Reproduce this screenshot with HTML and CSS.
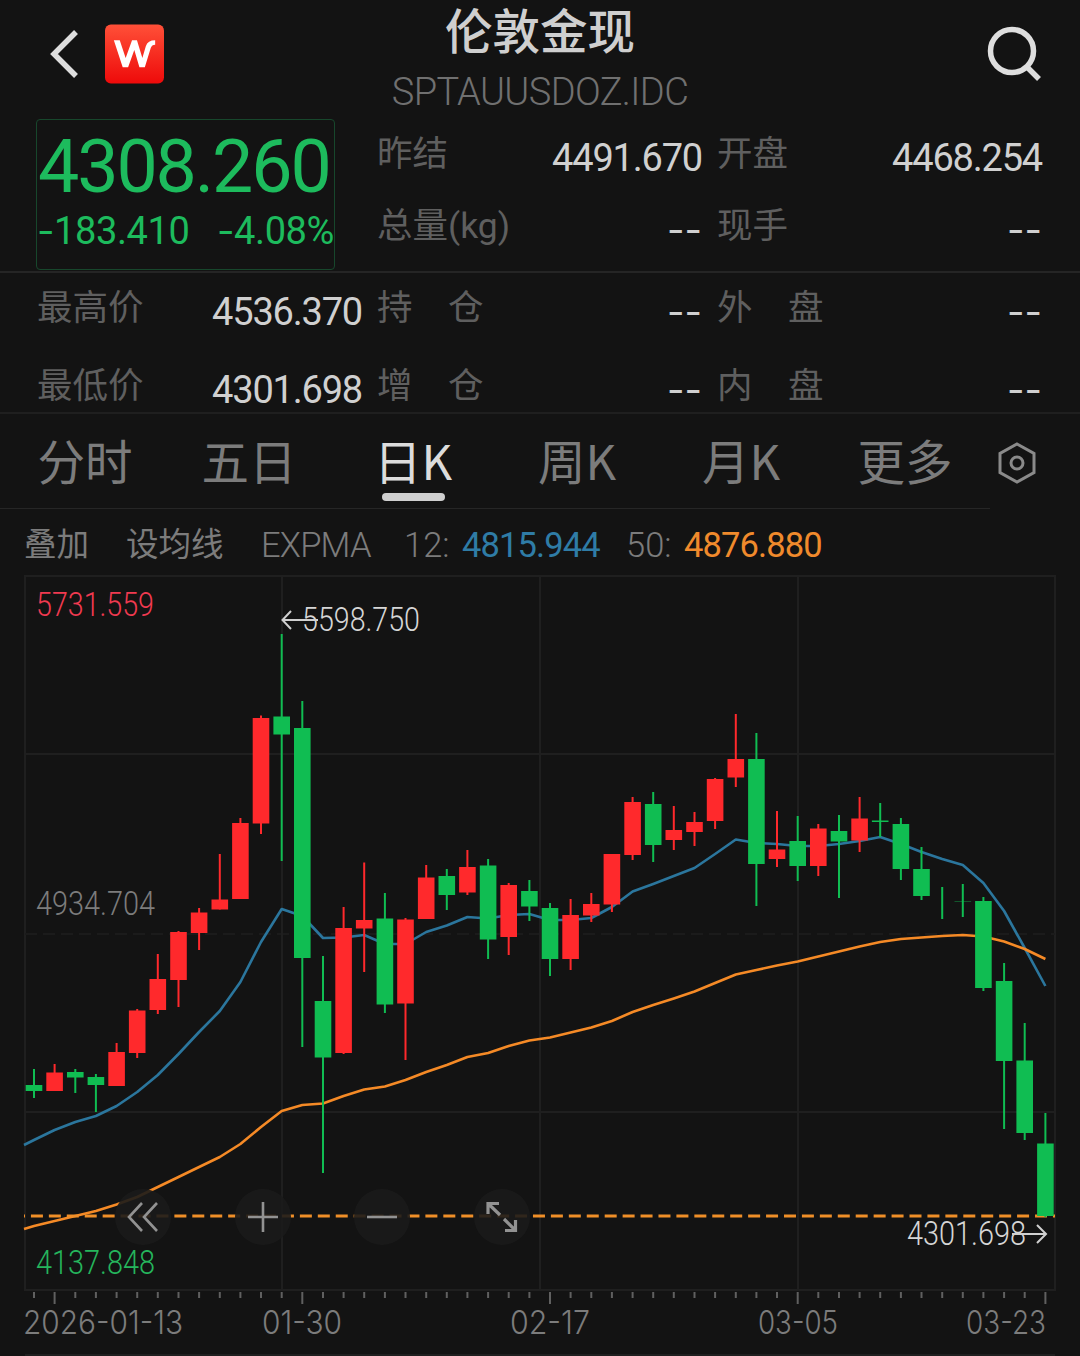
FILE: index.html
```html
<!DOCTYPE html>
<html lang="zh-CN">

<head>
    <meta charset="utf-8" />
    <title>伦敦金现</title>
    <link rel="stylesheet" href="styles.css">
</head>

<body>
    <header class="header">
        <div class="headerLeft">
            <svg class="back" viewBox="0 0 30 52">
                <path d="M26 4 L4 26 L26 48" />
            </svg>
            <svg class="logo" viewBox="0 0 60 60">
                <defs>
                    <linearGradient id="logoRed" x1="0" y1="0" x2="0" y2="1">
                        <stop offset="0" stop-color="#ff5038" />
                        <stop offset="1" stop-color="#ee0a0a" />
                    </linearGradient>
                </defs>
                <rect width="60" height="60" rx="6" fill="url(#logoRed)" />
                <path d="M9 16 H15 L21 34 L27.500 16 H32.500 L38 34 L41.500 22 Q43.500 16 51 16 V20.500 Q47.500 20.500 46.500 24 L40.500 43.500 H35 L29.800 26 L23.500 43.500 H18 Z" />
            </svg>
        </div>
        <div class="headerTitle">
            <h1>伦敦金现</h1>
            <p>SPTAUUSDOZ.IDC</p>
        </div>
        <svg class="search" viewBox="0 0 56 56">
            <circle cx="25" cy="25" r="21.500" />
            <path d="M40 41 L52 53" />
        </svg>
    </header>

    <section class="quote">
        <div class="priceBox">
            <div class="price">4308.260</div>
            <div class="change">
                <span><i>-</i>183.410</span>
                <span><i>-</i>4.08%</span>
            </div>
        </div>
        <div class="stat"><label>昨结</label><b>4491.670</b></div>
        <div class="stat"><label>开盘</label><b>4468.254</b></div>
        <div class="stat"><label>总量(kg)</label><b class="empty">--</b></div>
        <div class="stat"><label>现手</label><b class="empty">--</b></div>
    </section>

    <section class="details">
        <div class="stat"><label>最高价</label><b>4536.370</b></div>
        <div class="stat"><label>持　仓</label><b class="empty">--</b></div>
        <div class="stat"><label>外　盘</label><b class="empty">--</b></div>
        <div class="stat"><label>最低价</label><b>4301.698</b></div>
        <div class="stat"><label>增　仓</label><b class="empty">--</b></div>
        <div class="stat"><label>内　盘</label><b class="empty">--</b></div>
    </section>

    <nav class="tabs">
        <div class="tabList">
            <a>分时</a>
            <a>五日</a>
            <a class="active">日K</a>
            <a>周K</a>
            <a>月K</a>
            <a>更多</a>
        </div>
        <svg class="settings" viewBox="0 0 38 42">
            <path d="M19 2 L36 11.500 V30.500 L19 40 L2 30.500 V11.500 Z" />
            <circle cx="19" cy="21" r="6" />
        </svg>
    </nav>

    <div class="indicators">
        <span class="overlay">叠加</span>
        <span class="setting">设均线</span>
        <span class="name">EXPMA</span>
        <span class="period">12:</span>
        <span class="value blue">4815.944</span>
        <span class="period">50:</span>
        <span class="value orange">4876.880</span>
    </div>

    <div class="chart">
        <svg id="kline" width="1080" height="785" viewBox="0 571 1080 785"></svg>
        <div class="chartButtons">
            <button><svg viewBox="0 0 36 36"><path d="M17 4 L4 18 L17 32 M32 4 L19 18 L32 32" /></svg></button>
            <button><svg viewBox="0 0 36 36"><path d="M3 18 H33 M18 3 V33" /></svg></button>
            <button><svg viewBox="0 0 36 36"><path d="M3 18 H33" /></svg></button>
            <button><svg class="expand" viewBox="0 0 36 36"><path d="M4 15 V4.500 H15 M4.500 5 L16 16 M31.500 21 V31.500 H21 M31 31 L20 20" /></svg></button>
        </div>
    </div>

    <script src="chart.js"></script>
</body>

</html>
```
FILE: styles.css
```css
body {
    margin: 0;
    width: 1080px;
    height: 1356px;
    overflow: hidden;
    background-color: #131313;
    color: #d0d0d0;
    font-family: Roboto, "Noto Sans CJK SC", sans-serif;
}

.header {
    display: grid;
    grid-template-columns: 1fr auto 1fr;
    height: 119px;
}

.headerLeft {
    display: flex;
    padding-left: 50px;
    padding-top: 24px;
}

.back {
    width: 30px;
    height: 52px;
    margin-top: 4px;
    margin-right: 25px;
}

.back path {
    fill: none;
    stroke: #dedede;
    stroke-width: 5.5;
}

.logo {
    width: 59px;
    height: 60px;
}

.logo path {
    fill: white;
}

.headerTitle {
    text-align: center;
}

.headerTitle h1 {
    margin: 0;
    padding-top: 3px;
    font-size: 47.5px;
    line-height: 60px;
    font-weight: 500;
    color: #cfcfcf;
}

.headerTitle p {
    margin: 0;
    margin-top: 4px;
    font-size: 38px;
    line-height: 50px;
    letter-spacing: -0.6px;
    font-weight: 300;
    color: #707070;
}

.search {
    width: 56px;
    height: 56px;
    margin-top: 26px;
    margin-right: 37px;
    justify-self: end;
}

.search circle,
.search path {
    fill: none;
    stroke: #dedede;
    stroke-width: 5.5;
}

.quote {
    display: grid;
    grid-template-columns: 326px 326px 326px;
    grid-template-rows: 72px 72px;
    column-gap: 14px;
    height: 152px;
    padding-left: 36px;
    border-bottom: 2px solid #252525;
}

.priceBox {
    grid-row: span 2;
    box-sizing: border-box;
    width: 299px;
    height: 151px;
    border: 1px solid #17472c;
    border-radius: 4px;
    color: #1dbb5d;
}

.price {
    padding-top: 10px;
    padding-left: 1px;
    font-size: 73.5px;
    line-height: 74px;
    letter-spacing: -2.1px;
}

.change {
    display: flex;
    justify-content: space-between;
    padding-top: 4px;
    font-size: 38px;
    line-height: 44px;
    letter-spacing: -0.4px;
    white-space: nowrap;
}

.change i {
    font-family: Inter, sans-serif;
    font-style: normal;
}

.stat {
    display: flex;
    justify-content: space-between;
    align-items: center;
}

.stat label {
    font-size: 35.5px;
    line-height: 50px;
    padding-bottom: 2px;
    padding-left: 1px;
    color: #5f5f5f;
}

.stat b {
    font-size: 38px;
    line-height: 50px;
    padding-top: 6px;
    font-weight: 400;
    letter-spacing: -1.2px;
}

.stat .empty {
    padding-top: 3px;
    font-family: Inter, sans-serif;
    letter-spacing: 0;
}

.details {
    display: grid;
    grid-template-columns: 326px 326px 326px;
    grid-template-rows: 50px 50px;
    gap: 28px 14px;
    padding-left: 36px;
    padding-top: 11px;
    height: 128px;
    border-bottom: 2px solid #1f1f1f;
}

.tabs {
    display: flex;
    align-items: center;
    height: 95px;
}

.tabList {
    display: flex;
    width: 990px;
    height: 94px;
    box-sizing: border-box;
    padding-left: 3px;
    padding-right: 3px;
    border-bottom: 1px solid #262626;
}

.tabList a {
    display: flex;
    flex-direction: column;
    align-items: center;
    width: 164px;
    font-size: 47.5px;
    line-height: 90px;
    color: #7c7c7c;
    font-family: "Noto Sans CJK SC", sans-serif;
}

.tabList .active {
    color: #dcdcdc;
}

.tabList .active::after {
    content: "";
    width: 63px;
    height: 8px;
    margin-top: -12px;
    border-radius: 4px;
    background-color: #cfcfcf;
}

.settings {
    width: 38px;
    height: 42px;
    margin-left: 8px;
    margin-top: 2px;
}

.settings path,
.settings circle {
    fill: none;
    stroke: #8a8a8a;
    stroke-width: 3;
}

.indicators {
    display: flex;
    align-items: center;
    height: 62px;
    padding-left: 24px;
    padding-top: 10px;
    box-sizing: border-box;
    white-space: nowrap;
    font-size: 34.5px;
    line-height: 48px;
    color: #7c7c7c;
}

.overlay,
.setting {
    font-size: 32.5px;
}

.overlay {
    width: 102px;
}

.setting {
    width: 135px;
}

.indicators .name {
    width: 143px;
    font-weight: 300;
    letter-spacing: -0.8px;
}

.period {
    width: 58px;
    font-weight: 300;
}

.value {
    width: 164px;
    letter-spacing: -0.9px;
}

.blue {
    color: #2f7ca6;
}

.orange {
    color: #f08a2c;
}

.chart {
    position: relative;
    height: 785px;
}

.chart svg {
    display: block;
}

.grid {
    stroke: #1f1f1f;
    stroke-width: 2;
    fill: none;
}

.grid.dashed {
    stroke: #1b1b1b;
    stroke-dasharray: 12 6;
}

.tick {
    stroke: #606060;
    stroke-width: 2;
}

.ma {
    fill: none;
    stroke-width: 2.6;
    stroke-linejoin: round;
}

.ma12 {
    stroke: #2b769d;
}

.ma50 {
    stroke: #f58a26;
}

.current {
    stroke: #f08f28;
    stroke-width: 3;
    stroke-dasharray: 12 5.93;
    stroke-dashoffset: 11;
}

.up {
    fill: #ff292c;
}

.down {
    fill: #10bd52;
}

.label {
    font-family: Roboto, sans-serif;
    font-size: 33px;
    font-weight: 300;
}

.date {
    font-family: Inter, sans-serif;
    font-size: 32px;
    font-weight: 300;
    fill: #7c7c7c;
}

.red {
    fill: #f03a50;
}

.green {
    fill: #25b55c;
}

.gray {
    fill: #7c7c7c;
}

.white {
    fill: #d6d6d6;
}

.arrow {
    fill: none;
    stroke: #d0d0d0;
    stroke-width: 2;
}

/* zoom and scroll buttons over the chart */
.chartButtons {
    position: absolute;
    left: 115px;
    top: 618px;
    display: flex;
    gap: 63.5px;
}

.chartButtons button {
    width: 56px;
    height: 56px;
    padding: 0;
    border: none;
    border-radius: 50%;
    background-color: rgba(27, 27, 27, 0.9);
}

.chartButtons svg {
    width: 36px;
    height: 36px;
    margin: 0 auto;
}

.chartButtons path {
    fill: none;
    stroke: #929292;
    stroke-width: 2.6;
}

.chartButtons .expand path {
    stroke-width: 3.2;
}
```
FILE: chart.js
```js
const first = 34;
const step = 20.64;

// high, body top, body bottom, low (as y on the chart), r = up, g = down
const candles = [
    [1069, 1085, 1091, 1098, "g"],
    [1064, 1072.5, 1091, 1091, "r"],
    [1069, 1072, 1077.5, 1093, "g"],
    [1074, 1077, 1085, 1112, "g"],
    [1043, 1052, 1086, 1086, "r"],
    [1009, 1010.5, 1053, 1058, "r"],
    [954, 979, 1010, 1014, "r"],
    [931, 932, 980, 1007, "r"],
    [908, 912.5, 933, 950, "r"],
    [854, 899.5, 909.5, 909.5, "r"],
    [818, 823, 899, 899, "r"],
    [715.5, 718, 823.5, 834, "r"],
    [634, 716.5, 734.5, 861, "g"],
    [701, 728, 958, 1047, "g"],
    [956, 1001, 1057.5, 1173, "g"],
    [907, 928, 1053, 1054, "r"],
    [862.5, 920, 928.5, 972, "r"],
    [893, 918.5, 1004.5, 1013, "g"],
    [918, 919.5, 1003.5, 1060, "r"],
    [865, 877.5, 919, 919, "r"],
    [869, 876, 895, 910, "g"],
    [850, 867, 892.5, 895, "r"],
    [859, 865.5, 939.5, 959, "g"],
    [883, 885, 937, 955, "r"],
    [880, 891, 906.5, 921, "g"],
    [903, 908, 959, 976, "g"],
    [899, 915, 959, 970, "r"],
    [893, 904, 915.5, 922, "r"],
    [854, 854, 904.5, 912, "r"],
    [797, 802, 855, 860, "r"],
    [792, 804, 845, 862, "g"],
    [806, 830, 840, 850, "r"],
    [812, 822, 832, 846, "r"],
    [778, 779, 821, 829, "r"],
    [714, 759, 777.5, 787, "r"],
    [733, 759, 864, 906, "g"],
    [811, 849.5, 859, 867, "r"],
    [816, 841, 866, 881, "g"],
    [824, 828.5, 866, 876, "r"],
    [815, 831, 841.5, 898, "g"],
    [797, 818.5, 840.5, 852, "r"],
    [803, 820.5, 822, 837, "g"],
    [818, 824, 869, 880, "g"],
    [847, 869, 896, 900, "g"],
    [887, 902, 902, 919, "g"],
    [884, 901, 901.4, 917, "g"],
    [897, 901, 988, 991, "g"],
    [963, 981, 1061, 1129, "g"],
    [1023, 1060.5, 1133, 1140, "g"],
    [1113, 1143.5, 1216, 1217, "g"]
];

const ma12 = [1140, 1130, 1122, 1116, 1106, 1092, 1075, 1054, 1032, 1011, 982, 942, 909, 916, 938, 937.5, 935, 944, 944, 932, 925.5, 917, 918.5, 915, 914, 920, 920, 918, 907, 891.5, 884, 876, 868, 854, 839.5, 843, 844, 846, 846, 844, 841, 837, 844, 852, 859, 865, 883, 911, 948, 986];
const ma50 = [1226, 1221, 1216, 1211, 1204.5, 1197, 1187, 1177, 1167, 1157, 1144, 1127, 1111, 1105, 1103.5, 1096, 1089.5, 1086.5, 1080, 1072, 1065, 1057, 1053, 1046, 1040.5, 1037.5, 1032.5, 1027.5, 1021, 1012, 1005, 998.5, 991.5, 983, 974.5, 970, 965.5, 961.5, 956.5, 951.5, 946.5, 942, 939, 937.5, 936, 935, 936.5, 941.5, 949, 959];

function x(i) {
    return (first + i * step).toFixed(1);
}

function line(x1, y1, x2, y2, cls) {
    return `<line x1="${x1}" y1="${y1}" x2="${x2}" y2="${y2}" class="${cls}" />`;
}

function rect(x, y, w, h, cls) {
    return `<rect x="${x}" y="${y}" width="${w}" height="${h}" class="${cls}" />`;
}

function text(x, y, width, str, cls) {
    return `<text x="${x}" y="${y}" textLength="${width}" lengthAdjust="spacingAndGlyphs" class="${cls}">${str}</text>`;
}

function average(values, startY, cls) {
    const points = values.map((y, i) => x(i) + "," + y).join(" ");
    return `<polyline points="24,${startY} ${points}" class="ma ${cls}" />`;
}

let out = "";

// grid
out += `<rect x="25" y="576" width="1030" height="714" class="grid" />`;
out += line(25, 754, 1055, 754, "grid");
out += line(25, 934, 1055, 934, "grid dashed");
out += line(25, 1112, 1055, 1112, "grid");
for (const gx of [282, 540, 798]) {
    out += line(gx, 576, gx, 1290, "grid");
}
out += line(25, 1355, 1055, 1355, "grid");

out += average(ma12, 1145, "ma12");
out += average(ma50, 1229, "ma50");
out += line(24, 1216, 1055, 1216, "current");

candles.forEach(([high, top, bottom, low, color], i) => {
    const cls = color == "r" ? "up" : "down";
    out += rect(x(i) - 1, high, 2, low - high, cls);
    out += rect(x(i) - 8.3, top, 16.6, bottom - top, cls);
    out += line(x(i), 1292, x(i), i % 12 == 1 ? 1304 : 1298, "tick");
});

out += text(36, 616, 118, "5731.559", "label red");
out += text(36, 915, 119, "4934.704", "label gray");
out += text(36, 1274, 119, "4137.848", "label green");
out += text(302, 631, 118, "5598.750", "label white");
out += text(907, 1245, 119, "4301.698", "label white");
out += `<path d="M318 620 H283 M291 611 L282.500 620 L291 629" class="arrow" />`;
out += `<path d="M1012 1234 H1045 M1037 1225 L1046 1234 L1037 1243" class="arrow" />`;

out += text(23, 1334, 160, "2026-01-13", "date");
out += text(262, 1334, 80, "01-30", "date");
out += text(510, 1334, 80, "02-17", "date");
out += text(758, 1334, 80, "03-05", "date");
out += text(966, 1334, 80, "03-23", "date");

document.getElementById("kline").innerHTML = out;
```
